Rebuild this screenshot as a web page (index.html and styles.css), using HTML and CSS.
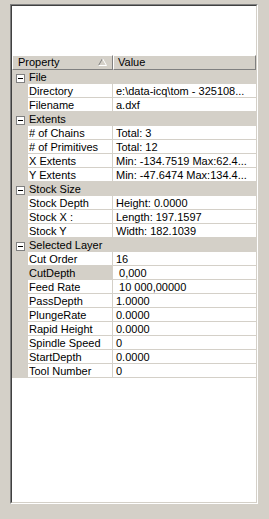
FILE: index.html
```html
<!DOCTYPE html>
<html>
<head>
<meta charset="utf-8">
<link rel="stylesheet" href="styles.css">
</head>
<body>
<div class="panel">
  <div class="inner">
    <div class="top-space"></div>
    <div class="head">
      <div class="hcell hprop"><span>Property</span>
        <svg class="sort" width="9" height="8" viewBox="0 0 9 8"><path d="M4.5 0.5 L0.5 7.5" stroke="#808080" stroke-width="1" fill="none"/><path d="M4.5 0.5 L8.5 7.5 L0.5 7.5" stroke="#ffffff" stroke-width="1" fill="none"/></svg>
      </div>
      <div class="hcell hval">Value</div>
    </div>
    <div class="rows">
      <div class="group"><span class="gut"><span class="toggle"></span></span><span class="gname">File</span></div>
      <div class="row"><span class="gut"></span><span class="prop">Directory</span><span class="val">e:\data-icq\tom - 325108...</span></div>
      <div class="row"><span class="gut"></span><span class="prop">Filename</span><span class="val">a.dxf</span></div>
      <div class="group"><span class="gut"><span class="toggle"></span></span><span class="gname">Extents</span></div>
      <div class="row"><span class="gut"></span><span class="prop"># of Chains</span><span class="val">Total: 3</span></div>
      <div class="row"><span class="gut"></span><span class="prop"># of Primitives</span><span class="val">Total: 12</span></div>
      <div class="row"><span class="gut"></span><span class="prop">X Extents</span><span class="val">Min: -134.7519 Max:62.4...</span></div>
      <div class="row"><span class="gut"></span><span class="prop">Y Extents</span><span class="val">Min: -47.6474 Max:134.4...</span></div>
      <div class="group"><span class="gut"><span class="toggle"></span></span><span class="gname">Stock Size</span></div>
      <div class="row"><span class="gut"></span><span class="prop">Stock Depth</span><span class="val">Height: 0.0000</span></div>
      <div class="row"><span class="gut"></span><span class="prop">Stock X :</span><span class="val">Length: 197.1597</span></div>
      <div class="row"><span class="gut"></span><span class="prop">Stock Y</span><span class="val">Width: 182.1039</span></div>
      <div class="group"><span class="gut"><span class="toggle"></span></span><span class="gname">Selected Layer</span></div>
      <div class="row"><span class="gut"></span><span class="prop">Cut Order</span><span class="val">16</span></div>
      <div class="row"><span class="gut"></span><span class="prop selected">CutDepth</span><span class="val">&nbsp;0,000</span></div>
      <div class="row"><span class="gut"></span><span class="prop">Feed Rate</span><span class="val">&nbsp;10 000,00000</span></div>
      <div class="row"><span class="gut"></span><span class="prop">PassDepth</span><span class="val">1.0000</span></div>
      <div class="row"><span class="gut"></span><span class="prop">PlungeRate</span><span class="val">0.0000</span></div>
      <div class="row"><span class="gut"></span><span class="prop">Rapid Height</span><span class="val">0.0000</span></div>
      <div class="row"><span class="gut"></span><span class="prop">Spindle Speed</span><span class="val">0</span></div>
      <div class="row"><span class="gut"></span><span class="prop">StartDepth</span><span class="val">0.0000</span></div>
      <div class="row"><span class="gut"></span><span class="prop">Tool Number</span><span class="val">0</span></div>
    </div>
  </div>
</div>
</body>
</html>
```
FILE: styles.css
```css
html, body {
  margin: 0;
  padding: 0;
  background: #d4d0c8;
}
body {
  font-family: "Liberation Sans", Arial, sans-serif;
  font-size: 11px;
  color: #000;
  padding: 4px 0 0 10px;
}
.panel {
  width: 248px;
  height: 500px;
  box-sizing: border-box;
  border: 1px solid;
  border-color: #808080 #ffffff #ffffff #808080;
  background: #fff;
}
.inner {
  height: 100%;
  box-sizing: border-box;
  border: 1px solid;
  border-color: #404040 #d4d0c8 #d4d0c8 #404040;
  display: flex;
  flex-direction: column;
}
.top-space {
  height: 49px;
  flex: none;
}
.head {
  display: grid;
  grid-template-columns: 101px 1fr;
  height: 15px;
  flex: none;
}
.hcell {
  box-sizing: border-box;
  background: #d4d0c8;
  border-top: 1px solid #fff;
  border-left: 1px solid #fff;
  border-right: 1px solid #808080;
  border-bottom: 1px solid #808080;
  line-height: 13px;
  white-space: nowrap;
}
.hprop {
  display: flex;
  align-items: center;
  justify-content: space-between;
  padding: 0 5px 0 5px;
}
.hprop span {
  line-height: 13px;
}
.sort {
  display: block;
  margin-top: -1px;
}
.hval {
  padding-left: 4px;
}
.rows {
  display: flex;
  flex-direction: column;
}
.row {
  display: grid;
  grid-template-columns: 16px 85px 1fr;
  height: 14px;
}
.group {
  display: grid;
  grid-template-columns: 16px 1fr;
  height: 14px;
  background: #d4d0c8;
}
.gut {
  background: #d4d0c8;
  display: block;
}
.toggle {
  display: block;
  position: relative;
  width: 9px;
  height: 9px;
  box-sizing: border-box;
  margin: 4px 0 0 4px;
  border: 1px solid #808080;
  background: #fff;
}
.toggle::after {
  content: "";
  position: absolute;
  left: 1px;
  top: 3px;
  width: 5px;
  height: 1px;
  background: #000;
}
.gname {
  padding: 1px 0 0 1px;
  line-height: 13px;
  white-space: nowrap;
}
.prop, .val {
  box-sizing: border-box;
  height: 14px;
  padding-top: 1px;
  line-height: 13px;
  white-space: nowrap;
  overflow-x: clip;
  border-bottom: 1px solid #d4d0c8;
  background: #fff;
}
.prop {
  padding-left: 1px;
  border-right: 1px solid #d4d0c8;
}
.prop.selected {
  background: #d4d0c8;
}
.val {
  padding-left: 3px;
}
```
